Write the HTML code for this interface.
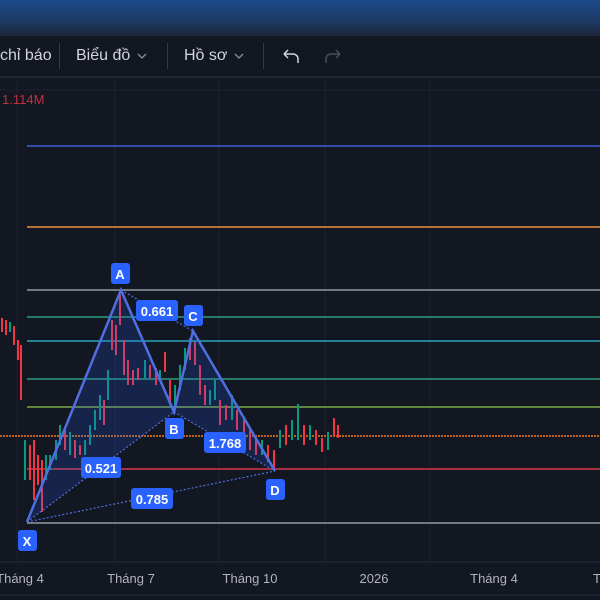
<!DOCTYPE html>
<html><head><meta charset="utf-8"><style>
*{margin:0;padding:0}
body{width:600px;height:600px;overflow:hidden;background:#131722;font-family:"Liberation Sans",sans-serif}
#top{position:absolute;left:0;top:0;width:600px;height:36px;background:linear-gradient(#1b4a8c,#1c3963 60%,#1d2638)}
#tb{position:absolute;left:0;top:37px;width:600px;height:39px;background:#131722;border-bottom:2px solid #22262f;color:#d1d4dc;font-size:16px}
#tb span{position:absolute;top:10px}
.sep{position:absolute;top:6px;width:1px;height:26px;background:#363a45}
</style></head><body>
<div id="top"></div>
<div id="tb">
<span style="left:0">chỉ báo</span><div class="sep" style="left:59px"></div>
<span style="left:76px">Biểu đồ</span><div class="sep" style="left:167px"></div>
<span style="left:184px">Hồ sơ</span><div class="sep" style="left:263px"></div>
<svg style="position:absolute;left:136px;top:15px" width="12" height="8"><path d="M2 2l4 4 4-4" stroke="#8a8e99" stroke-width="1.3" fill="none"/></svg>
<svg style="position:absolute;left:233px;top:15px" width="12" height="8"><path d="M2 2l4 4 4-4" stroke="#8a8e99" stroke-width="1.3" fill="none"/></svg>
<svg style="position:absolute;left:280px;top:11px" width="70" height="18"><path d="M4 6h9a5 5 0 0 1 5 5v4M4 6l4-4M4 6l4 4" stroke="#d1d4dc" stroke-width="1.5" fill="none"/><path d="M60 6h-9a5 5 0 0 0-5 5v4M60 6l-4-4M60 6l-4 4" stroke="#4a4e59" stroke-width="1.5" fill="none"/></svg>
</div>
<svg style="position:absolute;left:0;top:0" width="600" height="600">
<g stroke="#1e222d" stroke-width="1">
<line x1="17" y1="78" x2="17" y2="562"/><line x1="115" y1="78" x2="115" y2="562"/><line x1="219" y1="78" x2="219" y2="562"/><line x1="325" y1="78" x2="325" y2="562"/><line x1="430" y1="78" x2="430" y2="562"/>
<line x1="0" y1="90" x2="600" y2="90"/>
</g>
<line x1="0" y1="562" x2="600" y2="562" stroke="#2a2e39"/>
<line x1="0" y1="595" x2="600" y2="595" stroke="#2a2e39"/>
<text x="2" y="104" fill="#c2303d" font-size="13">1.114M</text>
<line x1="27" y1="146" x2="600" y2="146" stroke="#3c5fd8" stroke-width="1.5"/>
<line x1="27" y1="227" x2="600" y2="227" stroke="#e8923a" stroke-width="1.5"/>
<line x1="27" y1="290" x2="600" y2="290" stroke="#9598a1" stroke-width="1.5"/>
<line x1="27" y1="317" x2="600" y2="317" stroke="#2a9d7a" stroke-width="1.5"/>
<line x1="27" y1="341" x2="600" y2="341" stroke="#2aa6b8" stroke-width="1.5"/>
<line x1="27" y1="379" x2="600" y2="379" stroke="#2a9d7a" stroke-width="1.5"/>
<line x1="27" y1="407" x2="600" y2="407" stroke="#7aa845" stroke-width="1.5"/>
<line x1="0" y1="436" x2="600" y2="436" stroke="#f57c1f" stroke-width="1.5" stroke-dasharray="2 1"/>
<line x1="27" y1="469" x2="600" y2="469" stroke="#d9364a" stroke-width="1.5"/>
<line x1="27" y1="523" x2="600" y2="523" stroke="#9598a1" stroke-width="1.5"/>
<g stroke-width="2">
<line x1="2" y1="318" x2="2" y2="332" stroke="#f23645"/><line x1="6" y1="320" x2="6" y2="335" stroke="#f23645"/><line x1="10" y1="322" x2="10" y2="332" stroke="#089981"/><line x1="14" y1="326" x2="14" y2="345" stroke="#f23645"/><line x1="18" y1="340" x2="18" y2="360" stroke="#f23645"/><line x1="21" y1="345" x2="21" y2="400" stroke="#f23645"/>
<line x1="25" y1="440" x2="25" y2="480" stroke="#089981"/><line x1="30" y1="445" x2="30" y2="480" stroke="#f23645"/><line x1="34" y1="440" x2="34" y2="500" stroke="#f23645"/><line x1="38" y1="455" x2="38" y2="485" stroke="#f23645"/><line x1="42" y1="460" x2="42" y2="512" stroke="#f23645"/><line x1="46" y1="455" x2="46" y2="480" stroke="#089981"/><line x1="50" y1="455" x2="50" y2="470" stroke="#089981"/><line x1="56" y1="440" x2="56" y2="460" stroke="#089981"/><line x1="60" y1="425" x2="60" y2="445" stroke="#089981"/><line x1="65" y1="430" x2="65" y2="450" stroke="#f23645"/><line x1="70" y1="432" x2="70" y2="455" stroke="#089981"/><line x1="75" y1="440" x2="75" y2="458" stroke="#f23645"/><line x1="80" y1="445" x2="80" y2="455" stroke="#f23645"/><line x1="85" y1="440" x2="85" y2="455" stroke="#089981"/><line x1="90" y1="425" x2="90" y2="445" stroke="#089981"/><line x1="95" y1="410" x2="95" y2="430" stroke="#089981"/><line x1="100" y1="395" x2="100" y2="420" stroke="#089981"/><line x1="104" y1="400" x2="104" y2="425" stroke="#f23645"/><line x1="108" y1="370" x2="108" y2="400" stroke="#089981"/><line x1="112" y1="320" x2="112" y2="350" stroke="#f23645"/><line x1="116" y1="325" x2="116" y2="355" stroke="#f23645"/><line x1="120" y1="295" x2="120" y2="325" stroke="#f23645"/><line x1="124" y1="340" x2="124" y2="375" stroke="#f23645"/><line x1="128" y1="360" x2="128" y2="385" stroke="#f23645"/><line x1="133" y1="370" x2="133" y2="385" stroke="#f23645"/><line x1="138" y1="368" x2="138" y2="380" stroke="#f23645"/><line x1="145" y1="360" x2="145" y2="378" stroke="#089981"/><line x1="150" y1="365" x2="150" y2="378" stroke="#f23645"/><line x1="156" y1="368" x2="156" y2="385" stroke="#f23645"/><line x1="160" y1="370" x2="160" y2="380" stroke="#089981"/><line x1="165" y1="352" x2="165" y2="372" stroke="#f23645"/><line x1="170" y1="380" x2="170" y2="405" stroke="#f23645"/><line x1="175" y1="385" x2="175" y2="410" stroke="#089981"/><line x1="180" y1="365" x2="180" y2="390" stroke="#089981"/><line x1="185" y1="348" x2="185" y2="370" stroke="#089981"/><line x1="190" y1="338" x2="190" y2="360" stroke="#f23645"/><line x1="195" y1="342" x2="195" y2="365" stroke="#f23645"/><line x1="200" y1="365" x2="200" y2="395" stroke="#f23645"/><line x1="205" y1="385" x2="205" y2="405" stroke="#f23645"/><line x1="210" y1="390" x2="210" y2="405" stroke="#089981"/><line x1="215" y1="380" x2="215" y2="400" stroke="#089981"/><line x1="220" y1="400" x2="220" y2="425" stroke="#f23645"/><line x1="226" y1="405" x2="226" y2="420" stroke="#f23645"/><line x1="232" y1="395" x2="232" y2="420" stroke="#089981"/><line x1="237" y1="410" x2="237" y2="430" stroke="#f23645"/><line x1="244" y1="420" x2="244" y2="445" stroke="#f23645"/><line x1="250" y1="430" x2="250" y2="450" stroke="#f23645"/><line x1="256" y1="440" x2="256" y2="455" stroke="#f23645"/><line x1="262" y1="440" x2="262" y2="455" stroke="#089981"/><line x1="268" y1="445" x2="268" y2="462" stroke="#f23645"/><line x1="274" y1="450" x2="274" y2="468" stroke="#f23645"/><line x1="280" y1="430" x2="280" y2="448" stroke="#089981"/><line x1="286" y1="425" x2="286" y2="445" stroke="#f23645"/><line x1="292" y1="420" x2="292" y2="440" stroke="#089981"/><line x1="298" y1="404" x2="298" y2="440" stroke="#089981"/><line x1="304" y1="425" x2="304" y2="445" stroke="#f23645"/><line x1="310" y1="425" x2="310" y2="440" stroke="#089981"/><line x1="316" y1="430" x2="316" y2="445" stroke="#f23645"/><line x1="322" y1="438" x2="322" y2="452" stroke="#f23645"/><line x1="328" y1="432" x2="328" y2="450" stroke="#089981"/><line x1="334" y1="418" x2="334" y2="436" stroke="#f23645"/><line x1="338" y1="425" x2="338" y2="438" stroke="#f23645"/>
</g>
<polygon points="27,522 121,290 174,412" fill="rgba(41,98,255,0.18)"/>
<polygon points="174,412 193,331 275,471" fill="rgba(41,98,255,0.18)"/>
<polyline points="27,522 121,290 174,412 193,331 275,471" fill="none" stroke="#4f6fe0" stroke-width="2.5"/>
<g stroke="#4f6fe0" stroke-width="1.2" stroke-dasharray="2 2" fill="none"><line x1="27" y1="522" x2="174" y2="412"/><line x1="121" y1="290" x2="193" y2="331"/><line x1="174" y1="412" x2="275" y2="471"/><line x1="27" y1="522" x2="275" y2="471"/></g>
<g fill="#2962ff" font-size="13" font-weight="bold" text-anchor="middle">
<rect x="111" y="263" width="19" height="21" rx="3"/><rect x="184" y="305" width="19" height="21" rx="3"/><rect x="165" y="418" width="19" height="21" rx="3"/><rect x="266" y="479" width="19" height="21" rx="3"/><rect x="18" y="530" width="19" height="21" rx="3"/>
<rect x="136" y="300" width="42" height="21" rx="3"/><rect x="204" y="432" width="42" height="21" rx="3"/><rect x="81" y="457" width="40" height="21" rx="3"/><rect x="131" y="488" width="42" height="21" rx="3"/>
<g fill="#fff"><text x="120" y="279">A</text><text x="193" y="321">C</text><text x="174" y="434">B</text><text x="275" y="495">D</text><text x="27" y="546">X</text>
<text x="157" y="316">0.661</text><text x="225" y="448">1.768</text><text x="101" y="473">0.521</text><text x="152" y="504">0.785</text></g>
</g>
<g fill="#b2b5be" font-size="13" text-anchor="middle"><text x="20" y="583">Tháng 4</text><text x="131" y="583">Tháng 7</text><text x="250" y="583">Tháng 10</text><text x="374" y="583">2026</text><text x="494" y="583">Tháng 4</text><text x="597" y="583">T</text></g>
</svg>
</body></html>
